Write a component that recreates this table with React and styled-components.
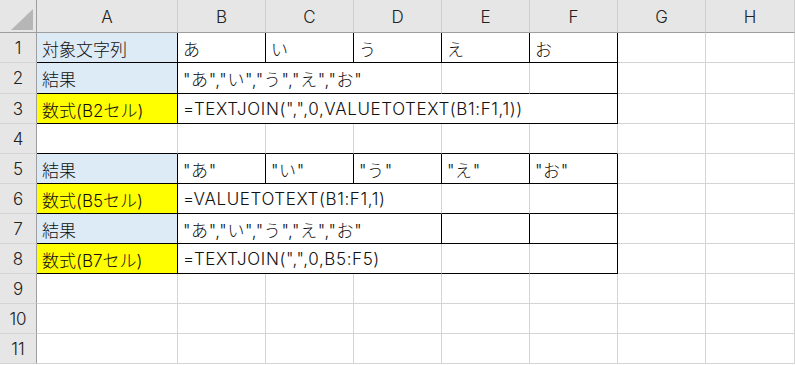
import React from 'react';
import styled, { createGlobalStyle } from 'styled-components';

const GlobalStyle = createGlobalStyle`
  html, body {
    margin: 0;
    padding: 0;
    background: #ffffff;
  }
  body {
    font-family: Inter, "Noto Sans CJK JP", sans-serif;
    overflow: hidden;
  }
`;

const GRID = '#d4d4d4';
const BLACK = '#000000';

const COLUMNS = ['A', 'B', 'C', 'D', 'E', 'F', 'G', 'H'];
const ROW_HEIGHTS = [30, 31, 30, 30, 30, 30, 30, 30, 30, 30, 30];

const Sheet = styled.div`
  display: grid;
  grid-template-columns: 37px 141px repeat(6, 88px) 89px;
  grid-template-rows: 33px ${ROW_HEIGHTS.map((h) => `${h}px`).join(' ')};
  width: 795px;
  height: 365px;
  overflow: hidden;
`;

const Corner = styled.div`
  position: relative;
  background: #e6e6e6;
  border-right: 1px solid #9e9e9e;
  border-bottom: 1px solid #9e9e9e;
  box-sizing: border-box;

  svg {
    position: absolute;
    left: 10px;
    top: 9px;
  }
`;

const ColHead = styled.div`
  display: flex;
  align-items: center;
  justify-content: center;
  background: #e6e6e6;
  border-right: 1px solid #cfcfcf;
  border-bottom: 1px solid #9e9e9e;
  box-sizing: border-box;
  font-size: 17px;
  font-weight: 300;
  color: #222222;
  padding-top: 1px;
`;

const RowHead = styled.div`
  display: flex;
  align-items: center;
  justify-content: center;
  background: #e6e6e6;
  border-right: 1px solid #9e9e9e;
  border-bottom: 1px solid ${GRID};
  box-sizing: border-box;
  font-size: 17px;
  font-weight: 300;
  color: #222222;
`;

const Cell = styled.div`
  grid-column: span ${(p) => p.$span || 1};
  display: flex;
  align-items: center;
  box-sizing: border-box;
  padding: 1px 0 0 5px;
  background: ${(p) => p.$bg || 'transparent'};
  border-right: 1px solid ${(p) => (p.$r === 'k' ? BLACK : GRID)};
  border-bottom: 1px solid ${(p) => (p.$b === 'k' ? BLACK : GRID)};
  font-size: 17px;
  font-weight: 300;
  letter-spacing: ${(p) => (p.$label ? '0' : '0.6px')};
  color: #111111;
  white-space: nowrap;
  overflow: visible;
`;

const BLUE = '#ddebf7';
const YELLOW = '#ffff00';

// each row: list of [text, span, rightBorder, bottomBorder, background]
const k = 'k';
const g = 'g';
const blankTail = [['', 1, g, g], ['', 1, g, g]];

const rows = [
  [
    ['対象文字列', 1, k, k, BLUE],
    ['あ', 1, k, k], ['い', 1, k, k], ['う', 1, k, k], ['え', 1, k, k], ['お', 1, k, k],
    ...blankTail,
  ],
  [
    ['結果', 1, k, k, BLUE],
    ['"あ","い","う","え","お"', 3, g, k], ['', 1, g, k], ['', 1, k, k],
    ...blankTail,
  ],
  [
    ['数式(B2セル)', 1, k, k, YELLOW],
    ['=TEXTJOIN(",",0,VALUETOTEXT(B1:F1,1))', 5, k, k],
    ...blankTail,
  ],
  [
    ['', 1, g, k],
    ['', 1, g, k], ['', 1, g, k], ['', 1, g, k], ['', 1, g, k], ['', 1, g, k],
    ...blankTail,
  ],
  [
    ['結果', 1, k, k, BLUE],
    ['"あ"', 1, k, k], ['"い"', 1, k, k], ['"う"', 1, k, k], ['"え"', 1, k, k], ['"お"', 1, k, k],
    ...blankTail,
  ],
  [
    ['数式(B5セル)', 1, k, k, YELLOW],
    ['=VALUETOTEXT(B1:F1,1)', 3, g, k], ['', 1, g, k], ['', 1, k, k],
    ...blankTail,
  ],
  [
    ['結果', 1, k, k, BLUE],
    ['"あ","い","う","え","お"', 3, k, k], ['', 1, k, k], ['', 1, k, k],
    ...blankTail,
  ],
  [
    ['数式(B7セル)', 1, k, k, YELLOW],
    ['=TEXTJOIN(",",0,B5:F5)', 3, g, k], ['', 1, g, k], ['', 1, k, k],
    ...blankTail,
  ],
];

const emptyRow = COLUMNS.map(() => ['', 1, g, g]);
while (rows.length < ROW_HEIGHTS.length) rows.push(emptyRow);

export default function App() {
  return (
    <>
      <GlobalStyle />
      <Sheet>
        <Corner>
          <svg width="24" height="22" viewBox="0 0 24 22">
            <polygon points="1,21 23,21 23,0" fill="#b6b6b6" />
          </svg>
        </Corner>
        {COLUMNS.map((c) => (
          <ColHead key={c}>{c}</ColHead>
        ))}
        {rows.map((cells, i) => (
          <React.Fragment key={i}>
            <RowHead>{i + 1}</RowHead>
            {cells.map(([text, span, r, b, bg], j) => (
              <Cell key={j} $span={span} $r={r} $b={b} $bg={bg} $label={j === 0}>
                {text}
              </Cell>
            ))}
          </React.Fragment>
        ))}
      </Sheet>
    </>
  );
}
